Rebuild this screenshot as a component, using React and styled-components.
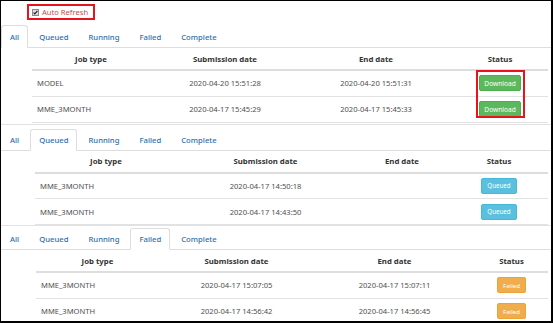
import React from 'react';
import styled, { createGlobalStyle } from 'styled-components';

const GlobalStyle = createGlobalStyle`
  html, body {
    margin: 0;
    padding: 0;
    background: #ffffff;
  }
  body {
    font-family: "Noto Sans", "Open Sans", Arial, sans-serif;
  }
  * {
    box-sizing: border-box;
  }
`;

const Page = styled.div`
  width: 553px;
  height: 323px;
  overflow: hidden;
  background: #ffffff;
  border-top: 1px solid #000;
  border-left: 1px solid #000;
  border-right: 2px solid #000;
  border-bottom: 2px solid #000;
`;

const Toolbar = styled.div`
  padding: 3px 0 0 26px;
  display: flex;
`;

const RefreshToggle = styled.label`
  display: inline-flex;
  align-items: center;
  gap: 3px;
  height: 16px;
  padding: 0 5px 0 3px;
  border: 2px solid #e8141c;
  font-size: 7.6px;
  color: #c0504b;
  cursor: pointer;
`;

const Panel = styled.section`
  margin-top: ${props => props.$top}px;
  padding-bottom: ${props => props.$pad}px;
  border-bottom: ${props => (props.$last ? 'none' : '1px solid #e2e2e2')};
`;

const Tabs = styled.ul`
  list-style: none;
  margin: 0;
  padding: 0;
  display: flex;
  height: ${props => props.$height}px;
  border-bottom: 1px solid #dddddd;
`;

const Tab = styled.li`
  height: ${props => props.$height}px;
  margin-right: 2px;
  padding: 0 8px;
  display: flex;
  align-items: center;
  font-size: 7.7px;
  font-weight: 500;
  color: #2f70ad;
  border: 1px solid ${props => (props.$active ? '#dddddd' : 'transparent')};
  border-bottom-color: ${props => (props.$active ? '#ffffff' : 'transparent')};
  border-radius: 3px 3px 0 0;
  background: ${props => (props.$active ? '#ffffff' : 'transparent')};
`;

const TableWrap = styled.div`
  position: relative;
  margin-left: ${props => props.$inset}px;
  width: ${props => props.$width}px;
`;

const Table = styled.table`
  width: 100%;
  border-collapse: collapse;
  table-layout: fixed;
`;

const HeadCell = styled.th`
  height: 22px;
  padding: 0;
  text-align: center;
  vertical-align: middle;
  font-size: 7.8px;
  font-weight: bold;
  color: #333333;
  border-bottom: 2px solid #dddddd;
`;

const Cell = styled.td`
  height: 26px;
  padding: 0 5px;
  vertical-align: middle;
  text-align: ${props => props.$align || 'center'};
  font-size: 7.6px;
  color: #505050;
  border-bottom: 1px solid #e2e2e2;
  white-space: nowrap;
`;

const StatusBadge = styled.span`
  display: inline-flex;
  align-items: center;
  justify-content: center;
  height: 16px;
  padding: 0 ${props => props.$padX}px;
  border-radius: 2px;
  font-size: ${props => props.$size}px;
  color: #ffffff;
  background: ${props => props.$bg};
  border: 1px solid ${props => props.$edge};
`;

const Highlight = styled.div`
  position: absolute;
  left: 444px;
  top: 22px;
  width: 49px;
  height: 48px;
  border: 2px solid #e8141c;
  pointer-events: none;
`;

const badgeStyles = {
  Download: { bg: '#5cb85c', edge: '#4cae4c', padX: 4.5, size: 6.6 },
  Queued: { bg: '#5bc0de', edge: '#46b8da', padX: 5.5, size: 6.2 },
  Failed: { bg: '#f0ad4e', edge: '#eea236', padX: 5, size: 6.1 },
};

const tabNames = ['All', 'Queued', 'Running', 'Failed', 'Complete'];

const panels = [
  {
    active: 'All',
    top: 5,
    pad: 1,
    tabHeight: 23,
    inset: 31,
    cols: [118, 150, 152, 96],
    highlight: true,
    rows: [
      ['MODEL', '2020-04-20 15:51:28', '2020-04-20 15:51:31', 'Download'],
      ['MME_3MONTH', '2020-04-17 15:45:29', '2020-04-17 15:45:33', 'Download'],
    ],
  },
  {
    active: 'Queued',
    top: 4,
    pad: 0,
    tabHeight: 22,
    inset: 34,
    cols: [142, 177, 96, 98],
    rows: [
      ['MME_3MONTH', '2020-04-17 14:50:18', '', 'Queued'],
      ['MME_3MONTH', '2020-04-17 14:43:50', '', 'Queued'],
    ],
  },
  {
    active: 'Failed',
    top: 2,
    pad: 0,
    tabHeight: 22,
    inset: 35,
    cols: [123, 155, 161, 73],
    last: true,
    rows: [
      ['MME_3MONTH', '2020-04-17 15:07:05', '2020-04-17 15:07:11', 'Failed'],
      ['MME_3MONTH', '2020-04-17 14:56:42', '2020-04-17 14:56:45', 'Failed'],
    ],
  },
];

const CheckIcon = () => (
  <svg width="7" height="7" viewBox="0 0 7 7">
    <rect x="0.5" y="0.5" width="6" height="6" fill="#dedede" stroke="#8a8a8a" />
    <path d="M1.6 3.6 L2.9 4.9 L5.4 1.8" fill="none" stroke="#222" strokeWidth="1.2" />
  </svg>
);

const JobPanel = ({ panel }) => {
  const tableWidth = panel.cols.reduce((sum, w) => sum + w, 0);
  return (
    <Panel $top={panel.top} $pad={panel.pad} $last={panel.last}>
      <Tabs $height={panel.tabHeight}>
        {tabNames.map(name => (
          <Tab key={name} $height={panel.tabHeight} $active={name === panel.active}>
            {name}
          </Tab>
        ))}
      </Tabs>
      <TableWrap $inset={panel.inset} $width={tableWidth}>
        <Table>
          <colgroup>
            {panel.cols.map((w, i) => (
              <col key={i} style={{ width: w }} />
            ))}
          </colgroup>
          <thead>
            <tr>
              <HeadCell>Job type</HeadCell>
              <HeadCell>Submission date</HeadCell>
              <HeadCell>End date</HeadCell>
              <HeadCell>Status</HeadCell>
            </tr>
          </thead>
          <tbody>
            {panel.rows.map((row, i) => {
              const badge = badgeStyles[row[3]];
              return (
                <tr key={i}>
                  <Cell $align="left">{row[0]}</Cell>
                  <Cell>{row[1]}</Cell>
                  <Cell>{row[2]}</Cell>
                  <Cell>
                    <StatusBadge
                      $bg={badge.bg}
                      $edge={badge.edge}
                      $padX={badge.padX}
                      $size={badge.size}
                    >
                      {row[3]}
                    </StatusBadge>
                  </Cell>
                </tr>
              );
            })}
          </tbody>
        </Table>
        {panel.highlight && <Highlight />}
      </TableWrap>
    </Panel>
  );
};

const App = () => (
  <>
    <GlobalStyle />
    <Page>
      <Toolbar>
        <RefreshToggle>
          <CheckIcon />
          Auto Refresh
        </RefreshToggle>
      </Toolbar>
      {panels.map(panel => (
        <JobPanel key={panel.active} panel={panel} />
      ))}
    </Page>
  </>
);

export default App;
